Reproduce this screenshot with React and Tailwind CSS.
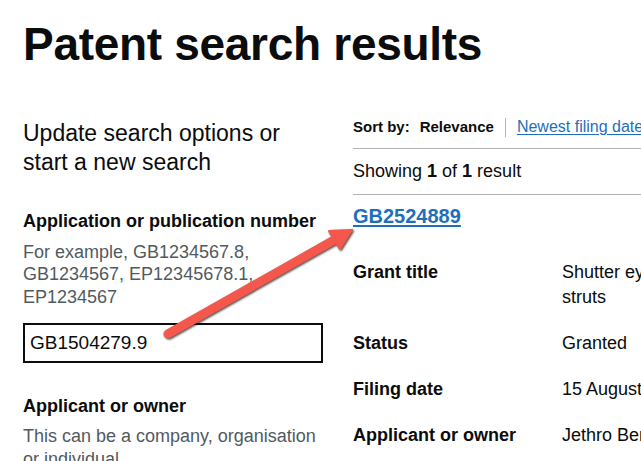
import React from 'react';

const FONT = { fontFamily: '"Liberation Sans", Arial, sans-serif' };

const rows = [
  { label: 'Grant title', value: 'Shutter eyelid with resilient struts' },
  { label: 'Status', value: 'Granted' },
  { label: 'Filing date', value: '15 August 2014' },
  { label: 'Applicant or owner', value: 'Jethro Bennett' },
];

function Arrow() {
  // annotation drawn over the screenshot
  return (
    <svg
      className="absolute inset-0 pointer-events-none"
      width="641"
      height="461"
      viewBox="0 0 641 461"
      style={{ filter: 'drop-shadow(1.5px 1.5px 1px rgba(0,0,0,0.75))' }}
    >
      <line x1="168" y1="334" x2="336" y2="239" stroke="#f4574b" strokeWidth="9" strokeLinecap="round" />
      <polygon points="352,230 340,249 329,231" fill="#f4574b" stroke="#f4574b" strokeWidth="2" strokeLinejoin="round" />
    </svg>
  );
}

export default function App() {
  return (
    <div className="relative w-full h-screen overflow-hidden bg-white text-[#0b0c0c]" style={FONT}>
      <div className="w-[800px] pl-[23px]">
        <h1 className="pt-[19px] text-[46px] leading-[50px] font-bold tracking-[-0.3px]">Patent search results</h1>

        <div className="mt-[48px] grid grid-cols-[300px_440px] gap-x-[30px]">
          {/* left: search form */}
          <div>
            <h2 className="mt-[1.5px] text-[23px] leading-[29px]">
              Update search options or start a new search
            </h2>

            <label className="block mt-[32px] text-[18px] leading-[24px] font-bold">
              Application or publication number
            </label>
            <p className="mt-[8px] text-[18px] leading-[22.5px] text-[#505a5f]">
              For example, GB1234567.8, GB1234567, EP12345678.1, EP1234567
            </p>
            <input
              readOnly
              value="GB1504279.9"
              className="mt-[15px] block w-[300px] h-[40px] border-2 border-[#0b0c0c] px-[5px] text-[19px] outline-none"
              style={FONT}
            />

            <label className="block mt-[31px] text-[18px] leading-[24px] font-bold">Applicant or owner</label>
            <p className="mt-[6.5px] text-[18px] leading-[23px] text-[#505a5f]">
              This can be a company, organisation or individual
            </p>
          </div>

          {/* right: results */}
          <div>
            <div className="flex items-center h-[20px] text-[15px] leading-[20px]">
              <span className="font-bold">Sort by:</span>
              <span className="ml-[10px] font-bold">Relevance</span>
              <span className="ml-[11px] w-px h-[19px] bg-[#b1b4b6]"></span>
              <a href="#" className="ml-[11px] text-[16px] text-[#1d70b8] underline underline-offset-2">
                Newest filing date
              </a>
            </div>
            <div className="mt-[11px] border-t border-[#b1b4b6]"></div>
            <p className="mt-[10px] text-[18px] leading-[24px]">
              Showing <span className="font-bold">1</span> of <span className="font-bold">1</span> result
            </p>
            <div className="mt-[11px] border-t border-[#b1b4b6]"></div>
            <a href="#" className="block mt-[8.5px] text-[20px] leading-[25px] font-bold text-[#1d70b8] underline underline-offset-2">
              GB2524889
            </a>

            <dl className="mt-[20px] text-[18px] leading-[25px]">
              {rows.map((r) => (
                <div key={r.label} className="grid grid-cols-[209px_230px] pt-[11px] pb-[10px]">
                  <dt className="font-bold">{r.label}</dt>
                  <dd>{r.value}</dd>
                </div>
              ))}
            </dl>
          </div>
        </div>
      </div>
      <Arrow />
    </div>
  );
}
